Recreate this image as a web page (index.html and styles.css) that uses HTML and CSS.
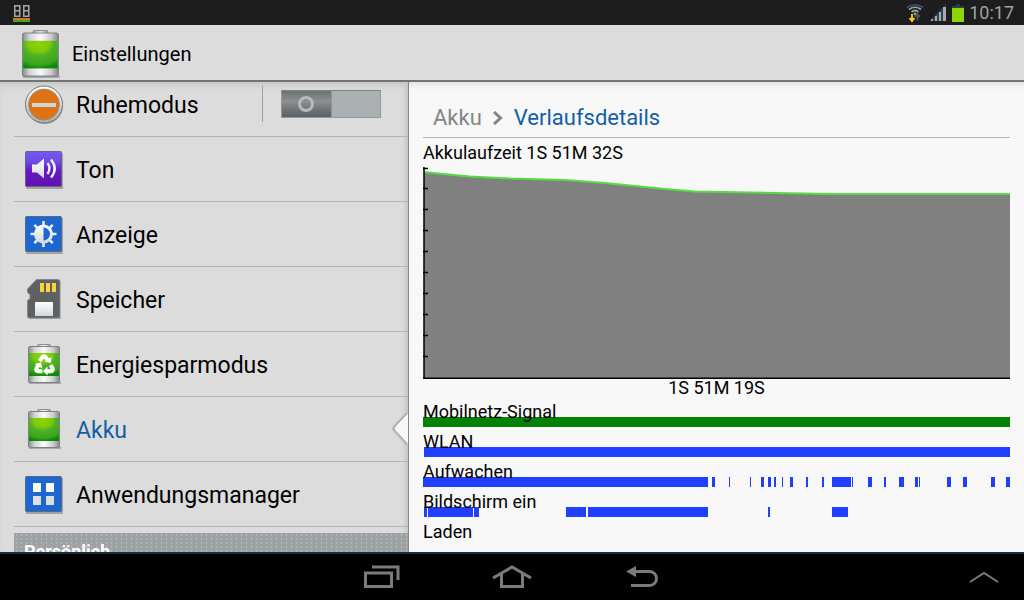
FILE: index.html
```html
<!DOCTYPE html>
<html lang="de">
<head>
<meta charset="utf-8">
<meta name="viewport" content="width=device-width, initial-scale=1">
<title>Einstellungen</title>
<link rel="stylesheet" href="styles.css">
</head>
<body>
<svg class="defs" width="0" height="0" aria-hidden="true">
  <defs>
    <linearGradient id="metal" x1="0" x2="1" y1="0" y2="0">
      <stop offset="0" stop-color="#8b8e90"/><stop offset=".2" stop-color="#d2d4d5"/><stop offset=".5" stop-color="#fbfbfb"/><stop offset=".8" stop-color="#cacccd"/><stop offset="1" stop-color="#85888a"/>
    </linearGradient>
    <radialGradient id="charge" cx=".45" cy=".1" r=".9">
      <stop offset="0" stop-color="#8ed604"/><stop offset=".35" stop-color="#7cc80c"/><stop offset=".5" stop-color="#4cb224"/><stop offset=".85" stop-color="#3da41c"/><stop offset="1" stop-color="#0c8a0c"/>
    </radialGradient>
    <linearGradient id="violet" x1="0" x2="0" y1="0" y2="1">
      <stop offset="0" stop-color="#7558f2"/><stop offset=".3" stop-color="#6b4be4"/><stop offset=".55" stop-color="#6419bd"/><stop offset="1" stop-color="#6112b4"/>
    </linearGradient>
    <linearGradient id="white" x1="0" x2="0" y1="0" y2="1">
      <stop offset="0" stop-color="#ffffff"/><stop offset="1" stop-color="#d4d6d8"/>
    </linearGradient>
    <linearGradient id="ring" x1="0" x2="0" y1="0" y2="1">
      <stop offset="0" stop-color="#ffffff"/><stop offset="1" stop-color="#a9acae"/>
    </linearGradient>
    <symbol id="battery" viewBox="0 0 40 40">
      <rect x="5" y="38" width="32" height="2" fill="#a8a8a8"/>
      <rect x="13.500" y=".5" width="13" height="5" rx="1.500" fill="url(#metal)" stroke="#8b8e90"/>
      <rect x="4.500" y="2.500" width="31" height="36" rx="1.500" fill="url(#metal)" stroke="#7e8183"/>
      <rect x="5" y="9" width="30" height="23" fill="url(#charge)"/>
    </symbol>
  </defs>
</svg>
<div class="screen">
  <div class="status-bar">
    <svg class="status-app" width="20" height="18" viewBox="0 0 20 18" aria-hidden="true">
      <path d="M2.750 1.750h5v5h-5zM2.750 6.750h5v5.500h-5zM11.750 1.750h5v5h-5zM11.750 6.750h5v5.500h-5z" fill="none" stroke="#a3a7a9" stroke-width="1.500"/>
      <path d="M1 14h17v2H1z" fill="#e0701a"/><path d="M1 16h17v2H1z" fill="#3fa52c"/>
    </svg>
    <div class="status-right">
      <svg width="18" height="20" viewBox="0 0 18 20" aria-hidden="true">
        <g fill="none" stroke="#9aa2a6" stroke-width="1.700"><path d="M1 4.500Q9-1 17 4.500" stroke="#31596b"/><path d="M3 6.500Q9 2 15 6.500"/><path d="M5.500 9Q9 6 12.500 9"/></g>
        <circle cx="9" cy="11" r="1.400" fill="#9aa2a6"/>
        <path d="M6 11v6M3.500 15L6 18l2.500-3" stroke="#ffd21e" stroke-width="1.800" fill="none"/>
        <path d="M11.500 17.500v-6M9 14l2.500-3 2.500 3" stroke="#44565e" stroke-width="1.800" fill="none"/>
      </svg>
      <svg width="18" height="18" viewBox="0 0 18 18" aria-hidden="true">
        <path d="M17 0v17H1z" fill="#2b4652"/>
        <path d="M2 15h2v2H2zM6 12h2v5H6zM10 8h2v9h-2zM14 3h3v14h-3z" fill="#a4abaf"/>
      </svg>
      <svg width="12" height="18" viewBox="0 0 12 18" aria-hidden="true">
        <path d="M4 0h4v2h4v4H0V2h4z" fill="#24424e"/><path d="M0 4h12v14H0z" fill="#8ed400"/>
      </svg>
      <time class="clock">10:17</time>
    </div>
  </div>
  <header class="app-header">
    <svg class="app-icon" width="38" height="48" viewBox="4 0 33 40" preserveAspectRatio="none" aria-hidden="true"><use href="#battery" width="40" height="40"/></svg>
    <h1 class="app-title">Einstellungen</h1>
  </header>
  <div class="content">
    <nav class="sidebar" aria-label="Einstellungen">
      <ul class="menu">
        <li class="row">
          <svg class="icon" viewBox="0 0 40 40" aria-hidden="true">
            <circle cx="21" cy="22" r="18" fill="#a5a5a5"/><circle cx="20" cy="20.500" r="18.500" fill="url(#ring)" stroke="#737678"/>
            <circle cx="20" cy="20.500" r="15.500" fill="#de7214" stroke="#8d8f90" stroke-width=".8"/>
            <path d="M8 19h24v4H8z" fill="#d2d5d6"/>
          </svg>
          <label class="name" for="quiet">Ruhemodus</label>
          <span class="switch-cell"><input class="switch" id="quiet" type="checkbox" role="switch"></span>
        </li>
        <li><a class="row" href="#ton">
          <svg class="icon" viewBox="0 0 40 40" aria-hidden="true">
            <rect x="2" y="4" width="37" height="36" rx="1" fill="#a3a3a3"/><rect x="1.500" y="2.500" width="36" height="35" rx="1" fill="url(#violet)" stroke="#686480"/>
            <path d="M8 15.500h5l7-6v20l-7-6H8z" fill="url(#white)"/><path d="M23.500 14q4 5 0 11M27 10.500q7.500 9 0 18" fill="none" stroke="#eef0f4" stroke-width="2.400"/>
          </svg><span class="name">Ton</span></a></li>
        <li><a class="row" href="#anzeige">
          <svg class="icon" viewBox="0 0 40 40" aria-hidden="true">
            <rect x="2" y="4" width="37" height="36" rx="1" fill="#a3a3a3"/><rect x="1.500" y="2.500" width="36" height="35" rx="1" fill="#1c67d2" stroke="#536b86"/>
            <path d="M19.500 7v26M6.500 20h26M10.300 10.800l18.400 18.400M28.700 10.800L10.300 29.200" stroke="#eceff1" stroke-width="2.600"/>
            <circle cx="19.500" cy="20" r="9.500" fill="url(#white)"/><path d="M19.500 13.500a6.500 6.500 0 0 1 0 13z" fill="#1c67d2"/>
          </svg><span class="name">Anzeige</span></a></li>
        <li><a class="row" href="#speicher">
          <svg class="icon" viewBox="0 0 40 40" aria-hidden="true">
            <path d="M5 38h32v2H5z" fill="#aaa"/>
            <path d="M12.500.5H34q2 0 2 2V37q0 2-2 2H5q-1.500 0-1.500-2V21.500l2.500-2v-4l-2.500-2V10z" fill="#5e6163" stroke="#86898b"/>
            <path d="M16 4h4v9h-4zM22 4h4v9h-4zM28 4h4v9h-4z" fill="#ffd23c"/><rect x="11" y="23" width="18" height="14" fill="url(#white)"/>
          </svg><span class="name">Speicher</span></a></li>
        <li><a class="row" href="#energiesparmodus">
          <svg class="icon" viewBox="0 0 40 40" aria-hidden="true">
            <use href="#battery" width="40" height="40"/>
            <g fill="none" stroke="#fff" stroke-width="4"><path d="M15.500 17l3-4q1.500-1.500 3 0l2.200 3"/><path d="M26.500 21l2.200 3.500q.5 2.500-2 2.800h-4"/><path d="M18.500 27.300h-4q-3-.5-2-3l2-3.300"/></g>
            <path d="M20.500 17.500l6.500 1.500.5-6zM23.500 22.500v9l-4.500-4.500zM10.500 20l6.500-1.500 1.500 6z" fill="#fff"/>
          </svg><span class="name">Energiesparmodus</span></a></li>
        <li><a class="row row-active" href="#akku" aria-current="page">
          <svg class="icon" viewBox="0 0 40 40" aria-hidden="true"><use href="#battery" width="40" height="40"/></svg><span class="name">Akku</span>
          <svg class="notch" width="17" height="34" viewBox="0 0 17 34" aria-hidden="true"><path d="M15.500 1L2.500 15q-1 1.500 0 3l13 15" fill="none" stroke="#c4c4c4" stroke-width="4"/><path d="M17 1h-1.500L2.500 15q-1 1.500 0 3l13 14H17z" fill="#f8f8f8"/><path d="M15.500 1L2.500 15q-1 1.500 0 3l13 14" fill="none" stroke="#8b8f91"/></svg></a></li>
        <li><a class="row" href="#anwendungsmanager">
          <svg class="icon" viewBox="0 0 40 40" aria-hidden="true">
            <rect x="2" y="4" width="37" height="36" rx="1" fill="#a3a3a3"/><rect x="1.500" y="2.500" width="36" height="35" rx="1" fill="#1c67d2" stroke="#536b86"/>
            <path d="M9 9h8v9H9zM22 9h8v9h-8z" fill="#fbfbfb"/><path d="M9 22h8v9H9zM22 22h8v9h-8z" fill="#dde0e2"/>
          </svg><span class="name">Anwendungsmanager</span></a></li>
      </ul>
      <h2 class="section">Persönlich</h2>
    </nav>
    <main class="details">
      <nav class="crumbs" aria-label="Pfad">
        <a class="crumb" href="#akku">Akku</a>
        <svg width="10" height="14" viewBox="0 0 10 14" aria-hidden="true"><path d="M1 1l6.500 6L1 13" fill="none" stroke="#858585" stroke-width="3"/></svg>
        <span class="crumb-current" aria-current="page">Verlaufsdetails</span>
      </nav>
      <h2 class="chart-title">Akkulaufzeit 1S 51M 32S</h2>
      <svg class="chart" viewBox="0 0 587 212" preserveAspectRatio="none" role="img" aria-label="Akkuladung">
        <path d="M1 5L20 7 47 9.500 87 11.500 142 13 182 16 217 19.500 242 22 272 24.500 407 27H587V211H1z" fill="#808080"/>
        <path d="M1 5L20 7 47 9.500 87 11.500 142 13 182 16 217 19.500 242 22 272 24.500 407 27H587" fill="none" stroke="#57db45" stroke-width="2"/>
        <path d="M1 0V211M0 211.200H587M0 1.500H5M0 21.500H5M0 42.500H5M0 63.500H5M0 84.500H5M0 105.500H5M0 126.500H5M0 147.500H5M0 168.500H5M0 189.500H5" fill="none" stroke="#000" stroke-width="1.500"/>
      </svg>
      <p class="chart-caption">1S 51M 19S</p>
      <ul class="tracks">
        <li class="track"><svg class="bar bar-signal" viewBox="0 0 587 10" preserveAspectRatio="none" aria-hidden="true"><path d="M0 0h587v10H0z"/></svg><span class="track-name">Mobilnetz-Signal</span></li>
        <li class="track"><svg class="bar" viewBox="0 0 587 10" preserveAspectRatio="none" aria-hidden="true"><path d="M1 0h586v10H1z"/></svg><span class="track-name">WLAN</span></li>
        <li class="track"><svg class="bar" viewBox="0 0 587 10" preserveAspectRatio="none" aria-hidden="true"><path d="M0 0h285v10H0zM289 0h3v10h-3zM306 0h1v10h-1zM327 0h1v10h-1zM338 0h3v10h-3zM345 0h3v10h-3zM351 0h2v10h-2zM359 0h1v10h-1zM367 0h3v10h-3zM383 0h2v10h-2zM399 0h2v10h-2zM409 0h19v10h-19zM429 0h1v10h-1zM445 0h4v10h-4zM461 0h2v10h-2zM476 0h5v10h-5zM492 0h3v10h-3zM496 0h1v10h-1zM524 0h4v10h-4zM540 0h4v10h-4zM568 0h4v10h-4zM583 0h4v10h-4z"/></svg><span class="track-name">Aufwachen</span></li>
        <li class="track"><svg class="bar" viewBox="0 0 587 10" preserveAspectRatio="none" aria-hidden="true"><path d="M1 0h3v10H1zM5 0h45v10H5zM51 0h5v10h-5zM143 0h20v10h-20zM165 0h120v10H165zM345 0h2v10h-2zM409 0h16v10h-16z"/></svg><span class="track-name">Bildschirm ein</span></li>
        <li class="track"><span class="track-name">Laden</span></li>
      </ul>
    </main>
  </div>
  <footer class="nav-bar">
    <span></span>
    <div class="nav-main">
      <button class="nav-button" type="button" aria-label="Letzte Anwendungen"><svg width="36" height="24" viewBox="0 0 36 24"><path d="M1.500 8h26v13.500h-26zM8 2h26v13" fill="none" stroke="#7b7b7b" stroke-width="3"/></svg></button>
      <button class="nav-button" type="button" aria-label="Startseite"><svg width="40" height="24" viewBox="0 0 40 24"><path d="M1 13L20 2l19 11M9.500 9v12.500h21V9" fill="none" stroke="#7b7b7b" stroke-width="3"/></svg></button>
      <button class="nav-button" type="button" aria-label="Zurück"><svg width="34" height="24" viewBox="0 0 34 24"><path d="M8 6.500h16.500a7 7 0 0 1 0 14H6" fill="none" stroke="#7b7b7b" stroke-width="3"/><path d="M1 6.500L11 1v11z" fill="#7b7b7b"/></svg></button>
    </div>
    <button class="nav-button nav-up" type="button" aria-label="Öffnen"><svg width="30" height="12" viewBox="0 0 30 12"><path d="M1 11L15 2l14 9" fill="none" stroke="#7b7b7b" stroke-width="2"/></svg></button>
  </footer>
</div>
</body>
</html>
```

FILE: styles.css
```css
* { box-sizing: border-box; }
body { margin: 0; font-family: Roboto, "Noto Sans", sans-serif; color: #000; background: #000; }
h1, h2, p, ul { margin: 0; padding: 0; font-weight: 400; }
ul { list-style: none; }
a { color: inherit; text-decoration: none; }
svg { display: block; flex: none; }
.defs { position: absolute; }

.screen { display: flex; flex-direction: column; height: 100vh; overflow: hidden; }

.status-bar { display: flex; flex: none; align-items: center; justify-content: space-between; height: 25px; padding: 0 10px 0 12px; background: #1d1d1d; color: #9da3a6; }
.status-right { display: flex; align-items: center; gap: 5px; }
.clock { font-size: 18px; line-height: 24px; }

.app-header { display: flex; flex: none; align-items: center; gap: 12px; height: 57px; padding: 2px 22px 0; background: #dcdcdc; border-bottom: 2px solid #737373; }
.app-title { font-size: 20px; line-height: 28px; }

.content { display: flex; flex: 1; min-height: 0; }
.sidebar { flex: 0 0 409px; overflow: hidden; padding-left: 14px; background: #dcdcdc; border-right: 1px solid #85888a; box-shadow: inset 0 6px 6px -3px #c4c5c5, inset -5px 0 5px -3px #bfc0c0; }
/* The list is shown slightly scrolled */
.menu { margin-top: -10px; }
.row { position: relative; display: flex; align-items: center; gap: 12px; height: 65px; padding-left: 10px; border-bottom: 1px solid #b5b5b5; }
.icon { width: 40px; height: 40px; }
.name { flex: 1; padding-top: 3px; font-size: 23px; line-height: 30px; }
.row-active { color: #145ea5; }
.notch { position: absolute; right: -1px; top: 15px; }
.switch-cell { display: flex; align-items: center; height: 36px; padding: 0 27px 0 18px; border-left: 1px solid #9ba3a7; }
.switch { appearance: none; display: grid; align-items: center; width: 100px; height: 28px; margin: 0; padding-left: 16px; border: 1px solid #92999d; border-top-color: #7e8385; background: linear-gradient(90deg, transparent 49px, #777b7d 49px, #abb0b2 50px), linear-gradient(#6d7274, #8d8f90 40%, #747474 70%, #5a6068); }
.switch::before { content: ""; box-sizing: border-box; width: 16px; height: 16px; border: 3px solid #b7b9ba; border-radius: 50%; }
.section { margin-top: 6px; padding: 4px 10px; background: #9da2a5 radial-gradient(circle, #b6babc 1px, transparent 1px) 0 0 / 5px 4px; color: #fff; font-size: 18px; font-weight: 700; line-height: 30px; }

.details { flex: 1; min-width: 0; padding: 0 14px; background: linear-gradient(#e4e4e4, #f8f8f8 8px); }
.crumbs { display: flex; align-items: center; gap: 11px; height: 56px; padding: 16px 10px 0; border-bottom: 1px solid #b4b4b4; font-size: 22px; line-height: 30px; }
.crumb { color: #858585; }
.crumb-current { color: #145ea5; }
.chart-title { font-size: 18px; line-height: 29px; }
.chart { width: 100%; height: 212px; }
.chart-caption { font-size: 18px; line-height: 18px; text-align: center; }
.track { display: grid; align-items: end; height: 30px; }
.bar, .track-name { grid-area: 1 / 1; }
.bar { width: 100%; height: 10px; fill: #203fff; shape-rendering: crispEdges; }
.bar-signal { fill: #058205; }
.track-name { z-index: 1; font-size: 18px; line-height: 30px; }

.nav-bar { display: grid; flex: none; grid-template-columns: 1fr auto 1fr; align-items: center; height: 48px; border-top: 2px solid #17303b; background: #000; }
.nav-main { display: flex; gap: 50px; }
.nav-button { display: grid; place-items: center; width: 80px; height: 46px; padding: 0; border: 0; background: none; }
.nav-up { justify-self: end; }
```
